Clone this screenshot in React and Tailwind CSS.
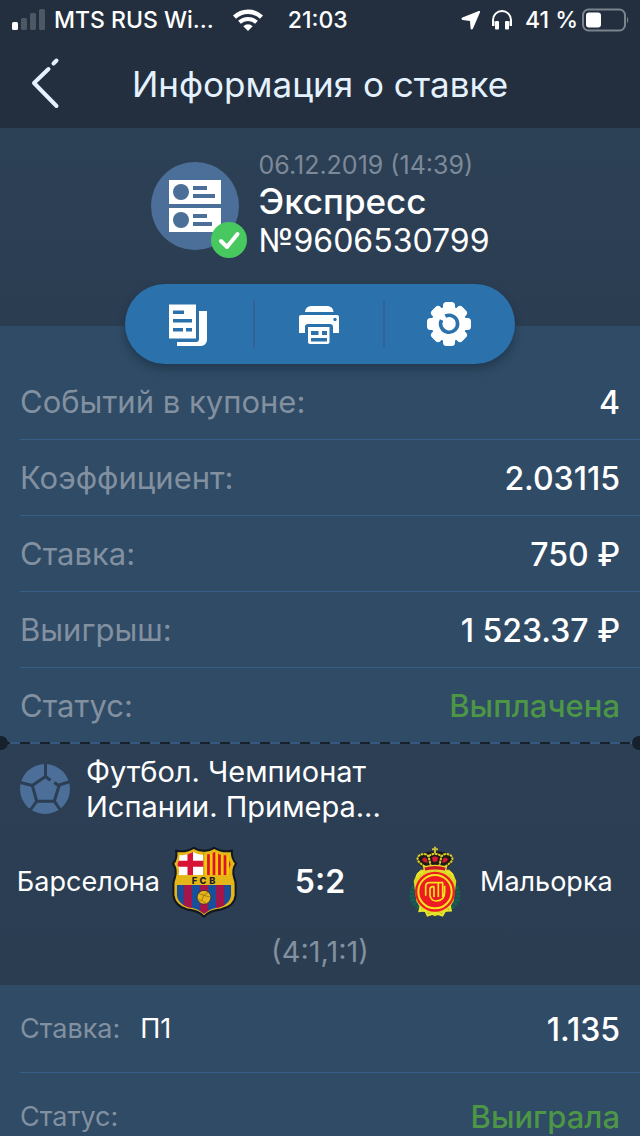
import React from "react";

function StatusBar() {
  return (
    <div className="flex h-10 shrink-0 items-center justify-between bg-[#232f3e] pl-3 pr-[10px] text-[23px] font-medium text-white">
      <div className="flex items-center">
        <svg className="mr-2 h-6 w-[34px]" viewBox="0 0 34 24" aria-hidden="true">
          <rect x="0" y="14" width="6" height="8" rx="1.5" fill="#fff" />
          <g fill="#4c5864">
            <rect x="9" y="10" width="6" height="12" rx="1.5" />
            <rect x="18" y="5" width="6" height="17" rx="1.5" />
            <rect x="27" y="1" width="6" height="21" rx="1.5" />
          </g>
        </svg>
        <span>MTS RUS Wi...</span>
        <svg className="ml-[18px] h-6 w-8" viewBox="0 0 32 24" aria-hidden="true">
          <path d="M2.5 9.2a19.5 19.5 0 0 1 27 0" fill="none" stroke="#fff" strokeWidth="4.4" />
          <path d="M7.5 14.3a12.3 12.3 0 0 1 17 0" fill="none" stroke="#fff" strokeWidth="4" />
          <path d="M11.3 18.2a6.8 6.8 0 0 1 9.4 0L16 23z" fill="#fff" />
        </svg>
        <span className="ml-6">21:03</span>
      </div>
      <div className="flex items-center">
        <svg className="h-5 w-5" viewBox="0 0 20 20" aria-hidden="true">
          <path d="M17.8 1 1.4 7.6C.2 8.2.3 9.700 1.600 9.900l7.400 1 .6 7.500c.2 1.400 1.700 1.500 2.300.3L19 2.200c.3-.9-.3-1.500-1.200-1.200z" fill="#fff" />
        </svg>
        <svg className="ml-[10px] h-5 w-[22px]" viewBox="0 0 22 20" aria-hidden="true">
          <path d="M2 14v-4a9 9 0 0 1 18 0v4" fill="none" stroke="#fff" strokeWidth="2" />
          <rect x="1" y="11" width="2.5" height="5" fill="#fff" />
          <rect x="18.5" y="11" width="2.5" height="5" fill="#fff" />
          <rect x="4" y="11" width="4" height="8.5" rx="1" fill="#fff" />
          <rect x="14" y="11" width="4" height="8.5" rx="1" fill="#fff" />
        </svg>
        <span className="ml-3">41 %</span>
        <svg className="ml-1 h-6 w-12" viewBox="0 0 48 24" aria-hidden="true">
          <rect x="1" y="1.5" width="42" height="21" rx="5.5" fill="none" stroke="#7b838d" strokeWidth="2" />
          <rect x="4" y="4.5" width="15" height="15" rx="3" fill="#fff" />
          <path d="M45 8.500q2.500 3.500 0 7z" fill="#7b838d" />
        </svg>
      </div>
    </div>
  );
}

function Header() {
  return (
    <header className="grid h-[88px] shrink-0 grid-cols-[88px_1fr_88px] items-center bg-[#232f3e] text-[#e4f2ff]">
      <button type="button" aria-label="Назад" className="flex h-full items-center pl-7">
        <svg className="h-14 w-9" viewBox="0 0 36 56" aria-hidden="true">
          <path d="M28.500 4.500 25.500 7.500M20.500 13 6 27l22.500 23" fill="none" stroke="currentColor" strokeWidth="4" strokeLinecap="round" strokeLinejoin="round" />
        </svg>
      </button>
      <h1 className="whitespace-nowrap text-center text-[35px] leading-[38px]">Информация о ставке</h1>
    </header>
  );
}

function CouponIcon() {
  return (
    <svg className="h-24 w-24" viewBox="0 0 96 96" aria-hidden="true">
      <circle cx="44" cy="44" r="44" fill="#4b6f98" />
      <path d="M18 18h52v24H18zM18 46h52v24H18z" fill="#fff" />
      <g fill="#4b6f98">
        <circle cx="30" cy="30" r="8" />
        <circle cx="30" cy="58" r="8" />
        <path d="M42 24h14v4H42zM42 32h22v4H42zM42 52h14v4H42zM42 60h19v4H42z" />
      </g>
      <circle cx="78" cy="78" r="18" fill="#47c95f" />
      <path d="m70 79 6 6L86.500 72" fill="none" stroke="#fff" strokeWidth="4" strokeLinecap="round" strokeLinejoin="round" />
    </svg>
  );
}

function CopyIcon() {
  return (
    <svg className="h-11 w-11" viewBox="0 0 44 44" aria-hidden="true">
      <path d="M2 2.500h27v34H2z" fill="#fff" />
      <path d="M32 9h8v29a6 6 0 0 1-6 6H10v-4h19a3 3 0 0 0 3-3z" fill="#fff" />
      <path d="M6 8.500h11v3.500H6zM6 17h19v3.500H6zM6 26h10v3.500H6zM19 26h6v3.500h-6z" fill="#2b71ab" />
    </svg>
  );
}

function PrintIcon() {
  return (
    <svg className="h-11 w-11" viewBox="0 0 44 44" aria-hidden="true">
      <path d="M8 10a6 6 0 0 1 6-6h16.500a6 6 0 0 1 6 6z" fill="#fff" />
      <path d="M4 13h36a2 2 0 0 1 2 2v16h-6v-6a3 3 0 0 0-3-3H11a3 3 0 0 0-3 3v6H2V15a2 2 0 0 1 2-2z" fill="#fff" />
      <circle cx="38" cy="17.5" r="1.7" fill="#2b71ab" />
      <path d="M11 25h21.500v15a2 2 0 0 1-2 2H13a2 2 0 0 1-2-2z" fill="#fff" />
      <path d="M14 29h7.500v4H14zM25 29h5v4h-5zM14 36h16v3.500H14z" fill="#2b71ab" />
    </svg>
  );
}

function GearIcon() {
  return (
    <svg className="h-11 w-11" viewBox="0 0 44 44" aria-hidden="true">
      <g fill="#fff">
        <circle cx="22" cy="22" r="17.5" />
        <rect x="16" y="0" width="12" height="44" rx="3.5" />
        <rect x="0" y="16" width="44" height="12" rx="3.5" />
        <rect x="16" y="0.5" width="12" height="43" rx="3.5" transform="rotate(45 22 22)" />
        <rect x="16" y="0.5" width="12" height="43" rx="3.5" transform="rotate(-45 22 22)" />
      </g>
      <path d="M18.300 14.200A8.500 8.500 0 1 1 14.500 18" fill="none" stroke="#2b71ab" strokeWidth="3.6" />
    </svg>
  );
}

function Summary() {
  return (
    <section className="bg-gradient-to-b from-[#2c4056] to-[#2b3d51] pt-5">
      <div className="flex h-[178px] items-start justify-center gap-3">
        <div className="pt-[14px]">
          <CouponIcon />
        </div>
        <div className="font-normal">
          <p className="text-[25px] leading-[34px] text-[#7d8998]">06.12.2019 (14:39)</p>
          <h2 className="text-[35px] font-medium leading-[38px] text-white">Экспресс</h2>
          <p className="text-[32px] leading-[42px] text-white">№9606530799</p>
        </div>
      </div>
    </section>
  );
}

function Toolbar() {
  const actions = [
    { label: "Копировать", Icon: CopyIcon },
    { label: "Печать", Icon: PrintIcon },
    { label: "Настройки", Icon: GearIcon },
  ];
  return (
    <div className="relative z-10 mx-auto -mt-[42px] flex h-20 w-[390px] items-center rounded-full bg-[#2b71ab] shadow-[0_5px_8px_rgba(20,35,50,0.45)]">
      {actions.map(({ label, Icon }) => (
        <button key={label} type="button" aria-label={label} className="flex h-12 flex-1 items-center justify-center border-r-2 border-[#336396] last:border-transparent">
          <Icon />
        </button>
      ))}
    </div>
  );
}

function InfoRow({ label, value, green }) {
  return (
    <div className="ml-5 flex h-[76px] items-center justify-between border-b border-[#375e8b] pr-5 pt-[2px] text-[31px] last:border-transparent">
      <dt className="text-[#8290a0]">{label}</dt>
      <dd className={green ? "font-medium text-[#4c9646]" : "text-[32px] font-medium text-white"}>{value}</dd>
    </div>
  );
}

function Divider() {
  return (
    <div className="relative z-10 -mt-2 flex h-[14px] items-center overflow-hidden">
      <span className="-ml-[6px] size-[14px] shrink-0 rounded-full bg-[#17212b]" />
      <span className="-ml-2 h-[2px] flex-1 bg-[repeating-linear-gradient(90deg,#17212b_0_10px,#36587f_10px_20px)]" />
      <span className="-ml-2 -mr-[6px] size-[14px] shrink-0 rounded-full bg-[#17212b]" />
    </div>
  );
}

function FootballIcon() {
  return (
    <svg className="size-[50px] shrink-0" viewBox="0 0 50 50" aria-hidden="true">
      <circle cx="25" cy="25" r="25" fill="#4b6f98" />
      <g fill="none" stroke="#2b3e53" strokeWidth="3">
        <path d="m30.500 16.300-5-3.800L12.300 21.500l4.400 15.700h17.600l4.700-15.200-4.700-3.500" />
        <path d="M25.500 12.500V0M12.300 21.500 0 18.500M39 21l11.500-3.500M16.700 37.200 10.500 46M34.300 37.200 40 45.500" />
      </g>
    </svg>
  );
}

function BarcelonaCrest() {
  return (
    <svg className="h-[70px] w-16 overflow-visible" viewBox="39 21 186 203" aria-hidden="true">
      <defs>
        <clipPath id="barca-top">
          <path d="M61 44q20 4 39-9 15 9 31 8v60H58q5-16-4-32 7-10 7-27zM133 43q16 1 31-8 17 13 39 9 0 17 7 27-9 16-4 32h-73z" />
        </clipPath>
        <clipPath id="barca-base">
          <path d="M53 131h158v30q-3 25-31 34-32 5-48 20-16-15-48-20-28-9-31-34z" />
        </clipPath>
      </defs>
      <path d="M51 32q28 5 51-9 15 9 30 9t30-9q23 14 51 9-1 23 12 37-13 20-5 42 4 9 4 20v30q-3 31-42 41-35 4-50 21-15-17-50-21-35-10-39-41v-30q0-11 4-20 8-22-5-42 13-14 9-37z" fill="#e5b617" stroke="#111820" strokeWidth="6" />
      <g clipPath="url(#barca-top)">
        <path d="M50 30h81v74H50z" fill="#fff" />
        <path d="M84 30h16v31h31v17h-31v26H84V78H50V61h34z" fill="#d91335" />
        <path d="M133 30h80v74h-80z" fill="#f6c900" />
        <path d="M141 30h8v74h-8zM157 30h8v74h-8zM173 30h8v74h-8zM189 30h8v74h-8zM205 30h8v74h-8z" fill="#d91335" />
      </g>
      <path d="M131 34v69" stroke="#b88a0b" strokeWidth="2" />
      <g fontFamily="Inter, sans-serif" fontSize="27" fontWeight="800" textAnchor="middle" fill="#17202a">
        <text x="104" y="127">F</text>
        <text x="129" y="127">C</text>
        <text x="156" y="127">B</text>
      </g>
      <g clipPath="url(#barca-base)">
        <path d="M50 131h164v90H50z" fill="#174f9c" />
        <path d="M73 131h24v90H73zM120 131h24v90h-24zM167 131h24v90h-24z" fill="#a41649" />
      </g>
      <circle cx="132" cy="167" r="20" fill="#e6b51b" stroke="#1a2531" strokeWidth="2" />
      <path d="m118 156 13 5 14-9M131 161l-5 15 12 9M126 176l-14-2M131 161l17 5" fill="none" stroke="#8a6a12" strokeWidth="2" />
    </svg>
  );
}

function MallorcaCrest() {
  return (
    <svg className="h-[72px] w-[55px]" viewBox="30 15 165 216" aria-hidden="true">
      <path d="M46 138q-12 18-4 40 10 22 34 27M170 138q12 18 4 40-10 22-34 27" fill="none" stroke="#17604f" strokeWidth="15" strokeDasharray="9 3" />
      <path d="M65 86h86l11 12 10 22-8 60-18 30-38 16-38-16-18-30-8-60 10-22z" fill="#ddd723" />
      <path d="M53 110q3-20 20-15M163 110q-3-20-20-15M65 196l-3 14 17-2 7 15 22-7 22 7 8-14 17-1-3-14" fill="none" stroke="#e9e52b" strokeWidth="7" />
      <path d="M74 82Q46 63 57 45q20-15 51-13 31-2 51 13 11 18-17 37z" fill="#1d1d18" />
      <path d="M78 77Q46 58 60 44q18-12 29 3l6 28M138 77q32-19 18-33-18-12-29 3l-6 28M89 45q19-13 38 0" fill="none" stroke="#e0cf2c" strokeWidth="6" strokeDasharray="8 2" />
      <path d="M69 56q8-12 15-2l2 11q-12 0-17-9zM147 56q-8-12-15-2l-2 11q12 0 17-9zM99 50q9-9 18 0l-3 12h-12z" fill="#d71932" />
      <path d="M108 17v20M99 25h18" stroke="#c5bd35" strokeWidth="6" />
      <path d="M74 78q34-10 68 0l-3 13q-31-7-62 0z" fill="#c91524" stroke="#e8d832" strokeWidth="4" />
      <circle cx="108" cy="152" r="60" fill="#ed1b24" />
      <circle cx="108" cy="152" r="50" fill="none" stroke="#f6e51c" strokeWidth="6" />
      <path d="M80 164v-27q0-12 12-12h41M93 166v-21q0-8 9-8h4M105 137v31M118 125v43M131 125v43M93 164q4 16 18 16 26 0 26-26v-20" fill="none" stroke="#f6e51c" strokeWidth="5" />
    </svg>
  );
}

function Match() {
  return (
    <section className="-mt-[6px] h-[241px] bg-gradient-to-b from-[#2c3f55] to-[#2b3d51] pt-[10px] text-white">
      <div className="flex items-center gap-4 pl-5">
        <FootballIcon />
        <h3 className="text-[29px] leading-[35px]">
          Футбол. Чемпионат
          <br />
          Испании. Примера...
        </h3>
      </div>
      <div className="mt-[22px] grid grid-cols-[1fr_64px_168px_64px_1fr] items-center text-[27px]">
        <span className="pr-3 text-right">Барселона</span>
        <BarcelonaCrest />
        <strong className="text-center text-[32px] font-semibold">5:2</strong>
        <span className="flex justify-center">
          <MallorcaCrest />
        </span>
        <span className="pl-3">Мальорка</span>
      </div>
      <p className="mt-[14px] text-center text-[29px] leading-10 text-[#8290a0]">(4:1,1:1)</p>
    </section>
  );
}

function BetRow({ label, pick, value, green }) {
  return (
    <div className="ml-5 flex h-[88px] items-center justify-between border-b border-[#375e8b] pr-5 pt-[2px] text-[27px]">
      <dt className="flex gap-5 text-[#8290a0]">
        {label}
        {pick && <span className="text-white">{pick}</span>}
      </dt>
      <dd className={green ? "text-[31px] font-medium text-[#4c9646]" : "text-[32px] font-medium text-white"}>{value}</dd>
    </div>
  );
}

export default function App() {
  return (
    <div className="flex h-screen flex-col bg-[#2f4b66] font-['Inter','Noto_Sans',sans-serif]">
      <StatusBar />
      <Header />
      <main className="min-h-0 flex-1 overflow-y-auto [scrollbar-width:none]">
        <Summary />
        <Toolbar />
        <dl>
          <InfoRow label="Событий в купоне:" value="4" />
          <InfoRow label="Коэффициент:" value="2.03115" />
          <InfoRow label="Ставка:" value="750 ₽" />
          <InfoRow label="Выигрыш:" value="1 523.37 ₽" />
          <InfoRow label="Статус:" value="Выплачена" green />
        </dl>
        <Divider />
        <Match />
        <dl>
          <BetRow label="Ставка:" pick="П1" value="1.135" />
          <BetRow label="Статус:" value="Выиграла" green />
        </dl>
      </main>
    </div>
  );
}
